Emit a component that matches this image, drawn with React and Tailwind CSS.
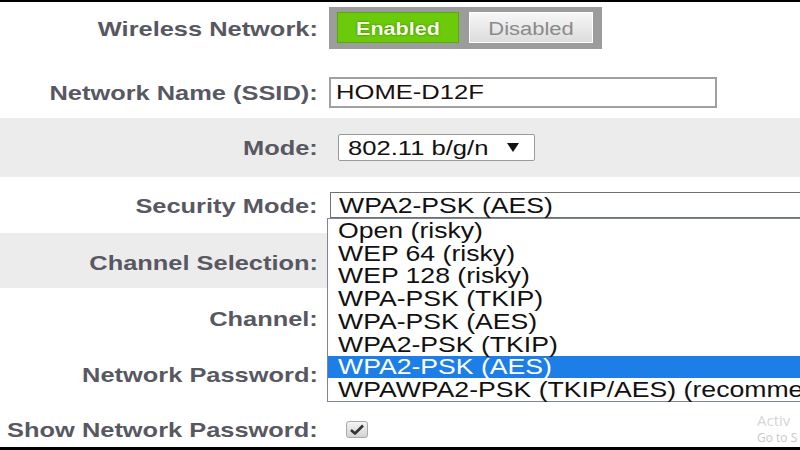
const options = [
  'Open (risky)',
  'WEP 64 (risky)',
  'WEP 128 (risky)',
  'WPA-PSK (TKIP)',
  'WPA-PSK (AES)',
  'WPA2-PSK (TKIP)',
  'WPA2-PSK (AES)',
  'WPAWPA2-PSK (TKIP/AES) (recommended)',
]

const Label = ({ children }) => (
  <div className="w-[320px] shrink-0 pr-[2px] text-right text-[21px] leading-none font-bold text-[#585862] whitespace-nowrap">
    <span className="inline-block origin-right scale-x-[1.21]">{children}</span>
  </div>
)

const App = () => {
  const selected = 'WPA2-PSK (AES)'

  return (
    <div className="relative w-[800px] h-[450px] overflow-hidden bg-white border-t-2 border-b-[3px] border-black font-['Liberation_Sans',Arial,sans-serif]">
      {/* Wireless Network */}
      <div className="flex items-center h-[52px]">
        <Label>Wireless Network:</Label>
        <div className="ml-[9px] flex gap-[10px] bg-[#9c9c9c] pl-[8px] pr-[9px] pt-[5px] pb-[6px]">
          <div className="w-[122px] h-[31px] flex items-center justify-center pt-[3px] bg-[#6bcb0b] border border-[#58a808] text-[18px] font-bold text-[#f4ffe6] [text-shadow:0_0_2px_#3a6a00]">
            <span className="inline-block scale-x-[1.2]">Enabled</span>
          </div>
          <div className="w-[124px] h-[31px] flex items-center justify-center pt-[3px] bg-gradient-to-b from-[#f7f7f7] to-[#dcdcdc] border border-white text-[18px] text-[#8a8a8a]">
            <span className="inline-block scale-x-[1.22]">Disabled</span>
          </div>
        </div>
      </div>

      {/* SSID */}
      <div className="flex items-center h-[64px] pt-3">
        <Label>Network Name (SSID):</Label>
        <div className="ml-[9px] w-[388px] h-[31px] border-2 border-[#a0a0a0] flex items-center pl-[5px] text-[20px] text-[#1a1010] whitespace-nowrap">
          <span className="inline-block origin-left scale-x-[1.28]">HOME-D12F</span>
        </div>
      </div>

      {/* Mode */}
      <div className="flex items-center h-[59px] bg-[#ececec]">
        <Label>Mode:</Label>
        <div className="ml-[18px] w-[197px] h-[27px] bg-white border border-[#9a9a9a] rounded-[2px] flex items-center pl-[9px] text-[20px] text-[#111] whitespace-nowrap">
          <span className="inline-block origin-left scale-x-[1.28]">802.11 b/g/n</span>
          <svg width="12" height="9" viewBox="0 0 12 9" className="ml-auto mr-[15px]">
            <path d="M0 0 H12 L6 9 Z" fill="#111" />
          </svg>
        </div>
      </div>

      {/* Security Mode */}
      <div className="relative z-10 flex items-center h-[56px]">
        <Label>Security Mode:</Label>
        <div className="relative ml-[10px]">
          <div className="w-[480px] h-[26px] border border-[#707070] flex items-center pl-[8px] text-[22px] text-[#111] whitespace-nowrap">
            <span className="inline-block origin-left scale-x-[1.21]">WPA2-PSK (AES)</span>
          </div>
          <div className="absolute left-[-3px] top-[26px] w-[490px] bg-white border border-[#7b8796]">
            {options.map((opt) => (
              <div
                key={opt}
                className={`h-[22.75px] flex items-center pl-[10px] text-[22px] whitespace-nowrap ${opt === selected ? 'bg-[#1c7ee6] text-white' : 'text-[#111]'}`}
              >
                <span className="inline-block origin-left scale-x-[1.21]">{opt}</span>
              </div>
            ))}
          </div>
        </div>
      </div>

      {/* Channel Selection */}
      <div className="flex items-center h-[55px] bg-[#ececec] pt-1">
        <Label>Channel Selection:</Label>
      </div>

      {/* Channel */}
      <div className="flex items-center h-[56px] pt-1">
        <Label>Channel:</Label>
      </div>

      {/* Network Password */}
      <div className="flex items-center h-[56px] pt-1">
        <Label>Network Password:</Label>
      </div>

      {/* Show Network Password */}
      <div className="flex items-center h-[47px] pt-3">
        <Label>Show Network Password:</Label>
        <div className="ml-[26px] w-[22px] h-[17px] rounded-[3px] border border-[#a8a8a8] bg-gradient-to-b from-[#f4f4f4] to-[#d4d4d4] flex items-center justify-center">
          <svg width="14" height="11" viewBox="0 0 14 11">
            <path d="M1 6 L5 9.5 L13 1.5" fill="none" stroke="#333" strokeWidth="2.6" strokeLinejoin="round" />
          </svg>
        </div>
      </div>

      {/* watermark */}
      <div className="absolute left-[757px] top-[411px] text-[15px] leading-none text-[#d6d6d6] font-['Open_Sans',sans-serif] whitespace-nowrap">
        Activ
      </div>
      <div className="absolute left-[757px] top-[430px] text-[12px] leading-none text-[#c8c8c8] font-['Open_Sans',sans-serif] whitespace-nowrap">
        Go to S
      </div>
    </div>
  )
}

export default App
